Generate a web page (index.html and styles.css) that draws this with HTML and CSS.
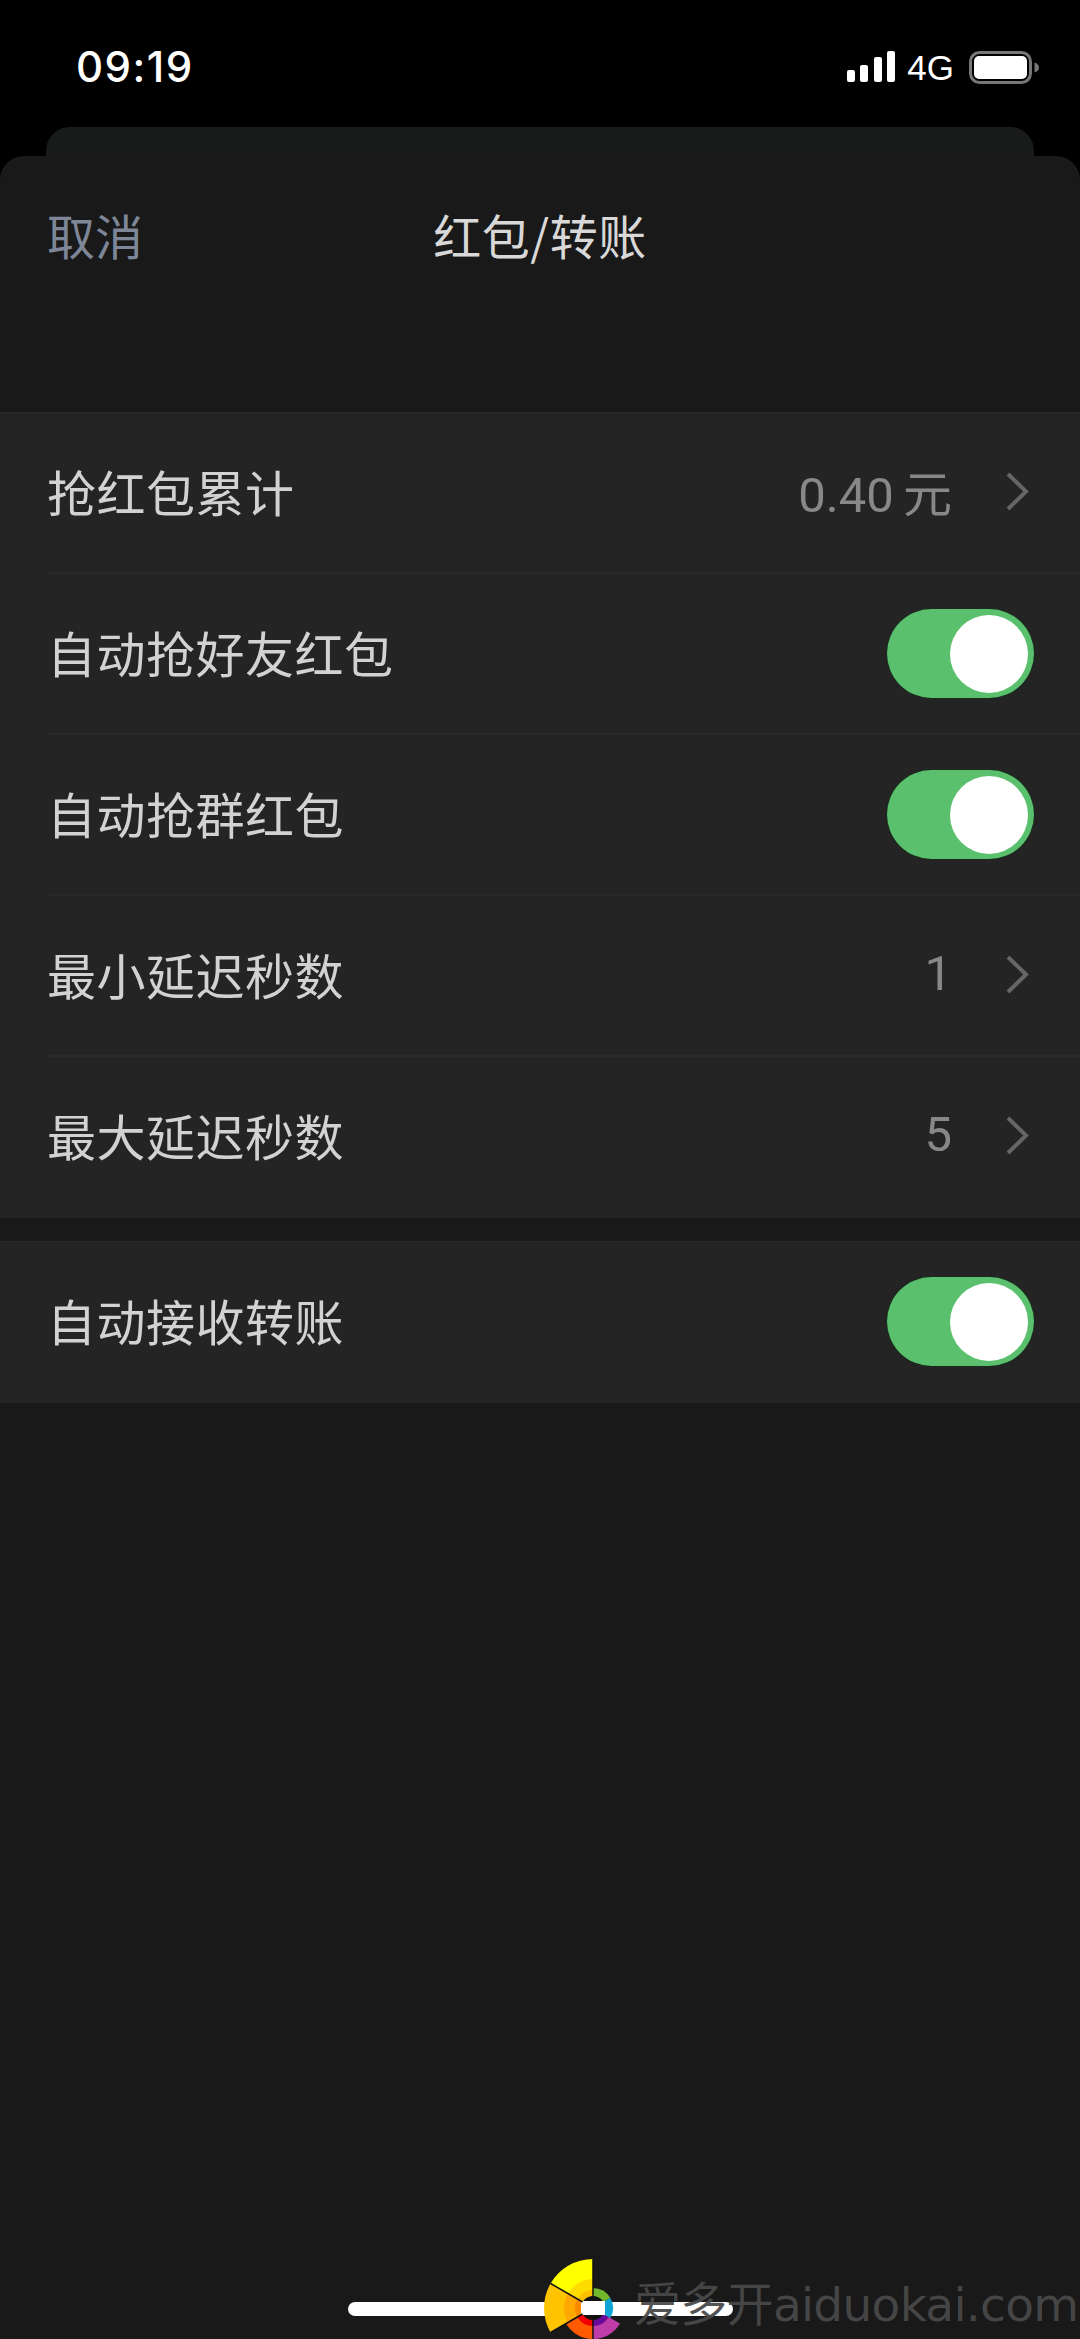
FILE: index.html
```html
<!DOCTYPE html>
<html lang="zh-CN">
<head>
<meta charset="utf-8">
<title>红包/转账</title>
<link rel="stylesheet" href="styles.css">
</head>
<body>
<div class="screen">
  <header class="status">
    <span class="time">09:19</span>
    <div class="status-right">
      <svg class="signal" width="49" height="31" viewBox="0 0 49 31"><rect x="0" y="19" width="8" height="12" rx="2"/><rect x="13" y="14" width="8" height="17" rx="2"/><rect x="27" y="6" width="8" height="25" rx="2"/><rect x="40" y="0" width="8" height="31" rx="2"/></svg>
      <span class="net">4G</span>
      <svg class="battery" width="70" height="33" viewBox="0 0 70 33"><rect x="1.500" y="1.500" width="60" height="30" rx="9" fill="none" stroke="#777" stroke-width="3"/><rect x="5" y="5" width="53" height="23" rx="5" fill="#fff"/><path d="M65.500 11.500c2.500.5 4.500 2.500 4.500 5s-2 4.500-4.500 5z" fill="#777"/></svg>
    </div>
  </header>
  <div class="back-sheet"></div>
  <main class="sheet">
    <nav class="nav">
      <span class="cancel">取消</span>
      <span class="title">红包/转账</span>
    </nav>
    <section class="group">
      <div class="row"><span class="label">抢红包累计</span><span class="value">0.40 元</span><svg class="chev" width="25" height="41" viewBox="0 0 25 41"><path d="M3 3l18 17.500L3 38" fill="none" stroke="#666" stroke-width="4"/></svg></div>
      <div class="row"><span class="label">自动抢好友红包</span><span class="toggle"><span class="knob"></span></span></div>
      <div class="row"><span class="label">自动抢群红包</span><span class="toggle"><span class="knob"></span></span></div>
      <div class="row"><span class="label">最小延迟秒数</span><span class="value">1</span><svg class="chev" width="25" height="41" viewBox="0 0 25 41"><path d="M3 3l18 17.500L3 38" fill="none" stroke="#666" stroke-width="4"/></svg></div>
      <div class="row"><span class="label">最大延迟秒数</span><span class="value">5</span><svg class="chev" width="25" height="41" viewBox="0 0 25 41"><path d="M3 3l18 17.500L3 38" fill="none" stroke="#666" stroke-width="4"/></svg></div>
    </section>
    <section class="group group-second">
      <div class="row"><span class="label">自动接收转账</span><span class="toggle"><span class="knob"></span></span></div>
    </section>
    <div class="home-bar"></div>
  </main>
  <div class="watermark">
    <svg class="logo" width="95" height="84" viewBox="0 0 95 84">
      <g transform="translate(53 53)" stroke="none">
        <path d="M0 0V-49A49 49 0 0 0-42.400-24.500Z" fill="#ffff00"/>
        <path d="M0 0V-29A29 29 0 0 0-25.100-14.500Z" fill="#ffdc00"/>
        <path d="M0 0V-18A18 18 0 0 0-15.600-9Z" fill="#ffc000"/>
        <path d="M0 0L-42.400-24.500A49 49 0 0 0-42.400 24.500Z" fill="#ffc400"/>
        <path d="M0 0L-25.100-14.500A29 29 0 0 0-25.100 14.500Z" fill="#ffa800"/>
        <path d="M0 0L-15.600-9A18 18 0 0 0-15.600 9Z" fill="#ff8a00"/>
        <path d="M0 0L-27 15.600A31 31 0 0 0 0 31Z" fill="#ff5a00"/>
        <path d="M0 0L-15.600 9A18 18 0 0 0 0 18Z" fill="#f00000"/>
        <path d="M0 0V31A31 31 0 0 0 27 15.600Z" fill="#c03ca8"/>
        <path d="M0 0V18A18 18 0 0 0 15.600 9Z" fill="#6a0a98"/>
        <path d="M0 0V-20A20 20 0 0 1 17.300-10Z" fill="#72b82e"/>
        <path d="M0 0L17.300-10A20 20 0 0 1 17.300 10Z" fill="#0ea4d4"/>
        <circle r="12" fill="#111"/>
        <rect x="-12" y="-7" width="24" height="14" fill="#fff"/>
        <path d="M0-49V-12M-42.400-24.500L-10.400-6M-42.400 24.500L-10.400 6M0 12V31" fill="none" stroke="#111" stroke-width="1.500"/>
      </g>
    </svg>
    <span class="wm-text">爱多开aiduokai.com</span>
  </div>
</div>
</body>
</html>
```
FILE: styles.css
```css
* { box-sizing: border-box; }
html, body { margin: 0; padding: 0; background: #000; }
.screen {
  position: relative;
  width: 1080px;
  height: 2339px;
  overflow: hidden;
  display: flex;
  flex-direction: column;
  background: #000;
  font-family: "Noto Sans CJK SC", Roboto, sans-serif;
}
.status {
  height: 127px;
  flex: none;
  display: flex;
  justify-content: space-between;
  padding: 44px 41px 0 76px;
  align-items: flex-start;
  color: #fff;
}
.time {
  font-family: Inter, "Liberation Sans", sans-serif;
  font-weight: 500;
  font-size: 42px;
  line-height: 46px;
  letter-spacing: 1.500px;
}
.status-right { display: flex; align-items: flex-start; padding-top: 7px; }
.signal { fill: #fff; margin-right: 11px; }
.net {
  font-family: "Liberation Sans", sans-serif;
  font-size: 35px;
  line-height: 32px;
  margin-right: 15px;
  margin-top: 1px;
}
.back-sheet {
  flex: none;
  height: 29px;
  margin: 0 46px;
  background: #191b1b;
  border-radius: 24px 24px 0 0;
}
.sheet {
  flex: 1;
  display: flex;
  flex-direction: column;
  background: #191919;
  border-radius: 24px 24px 0 0;
}
.nav {
  position: relative;
  flex: none;
  height: 156px;
  margin-bottom: 100px;
  display: flex;
  align-items: center;
  justify-content: center;
}
.cancel {
  position: absolute;
  left: 47px;
  font-size: 48px;
  color: #7e8798;
}
.title { font-size: 48px; color: #d8d8d8; font-weight: 400; letter-spacing: 0.500px; }
.group {
  flex: none;
  background: #242424;
  border-top: 1px solid #2a2a2a;
}
.group-second { margin-top: 23px; }
.row {
  height: 161px;
  margin-left: 47px;
  padding-right: 46px;
  display: flex;
  align-items: center;
  border-bottom: 2px solid #292929;
}
.row:last-child { border-bottom: 0; padding-bottom: 2px; }
.label {
  flex: 1;
  font-size: 49px;
  letter-spacing: 0.500px;
  padding-bottom: 5px;
  color: #d2d2d2;
  font-weight: 400;
}
.value {
  font-family: Roboto, "Noto Sans CJK SC", sans-serif;
  font-size: 49px;
  font-weight: 400;
  word-spacing: -3px;
  padding-bottom: 5px;
  color: #888;
  margin-right: 53px;
}
.chev { flex: none; margin-right: 4px; margin-bottom: 2px; }
.toggle {
  position: relative;
  width: 147px;
  height: 89px;
  border-radius: 45px;
  background: #5ac06d;
  box-shadow: 0 0 2px #0a3a14;
}
.knob {
  position: absolute;
  right: 6px;
  top: 6px;
  width: 78px;
  height: 78px;
  border-radius: 50%;
  background: #fff;
}
.home-bar {
  margin: auto 0 23px 348px;
  width: 385px;
  height: 14px;
  border-radius: 7px;
  background: #fff;
  flex: none;
}
.watermark {
  position: absolute;
  left: 540px;
  top: 2255px;
  width: 540px;
  height: 84px;
  display: flex;
  align-items: flex-start;
}
.logo { flex: none; }
.wm-text {
  margin-top: 18px;
  margin-left: -1px;
  font-family: "DejaVu Sans", "Noto Sans CJK SC", sans-serif;
  font-size: 47px;
  line-height: 64px;
  letter-spacing: -0.700px;
  white-space: nowrap;
  color: rgba(72, 72, 72, 0.95);
}
```
